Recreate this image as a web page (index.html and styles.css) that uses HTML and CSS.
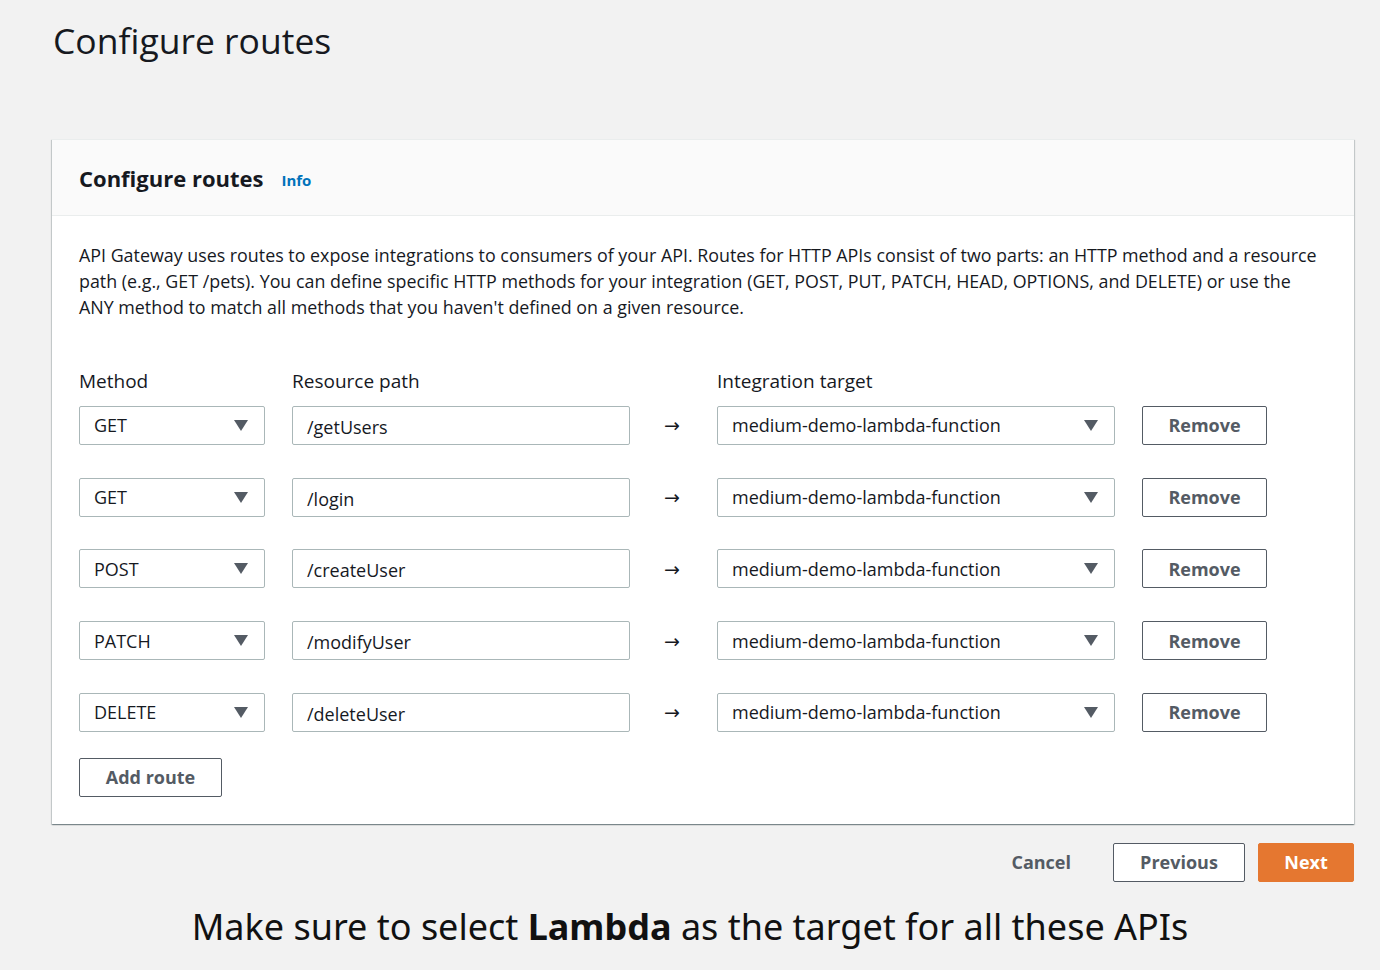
FILE: index.html
```html
<!DOCTYPE html>
<html lang="en">

<head>
  <meta charset="UTF-8" />
  <title>Configure routes</title>
  <link rel="stylesheet" href="styles.css">
</head>

<body>

  <h1 class="page-title">Configure routes</h1>

  <div class="card">
    <div class="card-header">
      <h2>Configure routes</h2>
      <a class="info" href="#">Info</a>
    </div>

    <div class="card-body">
      <p class="intro">
        API Gateway uses routes to expose integrations to consumers of your API. Routes for HTTP APIs consist of two parts: an HTTP method and a resource<br>
        path (e.g., GET /pets). You can define specific HTTP methods for your integration (GET, POST, PUT, PATCH, HEAD, OPTIONS, and DELETE) or use the<br>
        ANY method to match all methods that you haven't defined on a given resource.
      </p>

      <div class="routes">
        <div class="col-label">Method</div>
        <div class="col-label">Resource path</div>
        <div></div>
        <div class="col-label">Integration target</div>
        <div></div>

        <div class="select">GET<span class="caret"></span></div>
        <div class="input">/getUsers</div>
        <div class="arrow">&rarr;</div>
        <div class="select">medium-demo-lambda-function<span class="caret"></span></div>
        <button class="btn">Remove</button>

        <div class="select">GET<span class="caret"></span></div>
        <div class="input">/login</div>
        <div class="arrow">&rarr;</div>
        <div class="select">medium-demo-lambda-function<span class="caret"></span></div>
        <button class="btn">Remove</button>

        <div class="select">POST<span class="caret"></span></div>
        <div class="input">/createUser</div>
        <div class="arrow">&rarr;</div>
        <div class="select">medium-demo-lambda-function<span class="caret"></span></div>
        <button class="btn">Remove</button>

        <div class="select">PATCH<span class="caret"></span></div>
        <div class="input">/modifyUser</div>
        <div class="arrow">&rarr;</div>
        <div class="select">medium-demo-lambda-function<span class="caret"></span></div>
        <button class="btn">Remove</button>

        <div class="select">DELETE<span class="caret"></span></div>
        <div class="input">/deleteUser</div>
        <div class="arrow">&rarr;</div>
        <div class="select">medium-demo-lambda-function<span class="caret"></span></div>
        <button class="btn">Remove</button>
      </div>

      <button class="btn add-route">Add route</button>
    </div>
  </div>

  <div class="footer">
    <button class="btn link">Cancel</button>
    <button class="btn previous">Previous</button>
    <button class="btn primary">Next</button>
  </div>

  <p class="caption">Make sure to select <strong>Lambda</strong> as the target for all these APIs</p>

</body>

</html>
```

FILE: styles.css
```css
body {
  margin: 0;
  background: #f2f2f2;
  color: #16191f;
  font-family: "Open Sans", "Noto Sans", sans-serif;
  padding: 0 26px 0 52px;
}

.page-title {
  margin: 0;
  padding: 16px 0 0 1px;
  font-size: 35.5px;
  font-weight: 400;
  line-height: 48px;
  height: 123px;
}

/* main card */
.card {
  background: #fff;
  border-top: 1px solid #eaeded;
  box-shadow: 0 1px 1px 0 rgba(0, 28, 36, 0.3), 1px 1px 1px 0 rgba(0, 28, 36, 0.15), -1px 1px 1px 0 rgba(0, 28, 36, 0.15);
}

.card-header {
  background: #fafafa;
  border-bottom: 1px solid #eaeded;
  height: 75px;
  display: flex;
  align-items: center;
  padding: 0 27px;
  gap: 18px;
}

.card-header h2 {
  margin: 0;
  font-size: 22px;
  font-weight: 700;
}

.info {
  color: #0073bb;
  font-size: 15px;
  font-weight: 700;
  text-decoration: none;
  margin-top: 4px;
}

.card-body {
  padding: 26px 27px 27px;
}

.intro {
  margin: 0;
  font-size: 17.85px;
  line-height: 26px;
  white-space: nowrap;
}

.routes {
  margin-top: 49px;
  display: grid;
  grid-template-columns: 186px 338px 33px 398px 125px;
  column-gap: 27px;
  row-gap: 32.8px;
  align-items: center;
}

.col-label {
  font-size: 19px;
  line-height: 24px;
  margin-bottom: -20px;
  align-self: end;
}

.select,
.input {
  box-sizing: border-box;
  height: 39px;
  border: 1px solid #aab7b8;
  border-radius: 2px;
  background: #fff;
  font-size: 18px;
  display: flex;
  align-items: center;
  padding: 0 14px;
}

.input {
  padding-top: 3px;
}

.select {
  justify-content: space-between;
}

.caret {
  width: 0;
  height: 0;
  border-left: 7px solid transparent;
  border-right: 7px solid transparent;
  border-top: 11px solid #545b64;
  margin-right: 2px;
}

.arrow {
  text-align: center;
  font-family: "DejaVu Sans", sans-serif;
  font-size: 19px;
  line-height: 24px;
  color: #16191f;
  padding-right: 3px;
}

.btn {
  box-sizing: border-box;
  height: 39px;
  border: 1px solid #545b64;
  border-radius: 2px;
  background: #fff;
  color: #545b64;
  font-family: inherit;
  font-size: 18px;
  font-weight: 700;
  padding: 0 20px;
  cursor: pointer;
}

.add-route {
  margin-top: 26px;
  width: 143px;
}

.footer {
  display: flex;
  justify-content: flex-end;
  align-items: center;
  gap: 13px;
  margin-top: 19px;
}

.btn.link {
  border-color: transparent;
  background: transparent;
  margin-right: 8px;
}

.btn.previous {
  width: 132px;
}

.btn.primary {
  width: 96px;
  background: #e57730;
  border-color: #e57730;
  color: #fff;
}

.caption {
  margin: 20px 0 0 -26px;
  text-align: center;
  font-size: 36px;
  font-family: "Noto Sans", "Open Sans", sans-serif;
  color: #111;
}
```
